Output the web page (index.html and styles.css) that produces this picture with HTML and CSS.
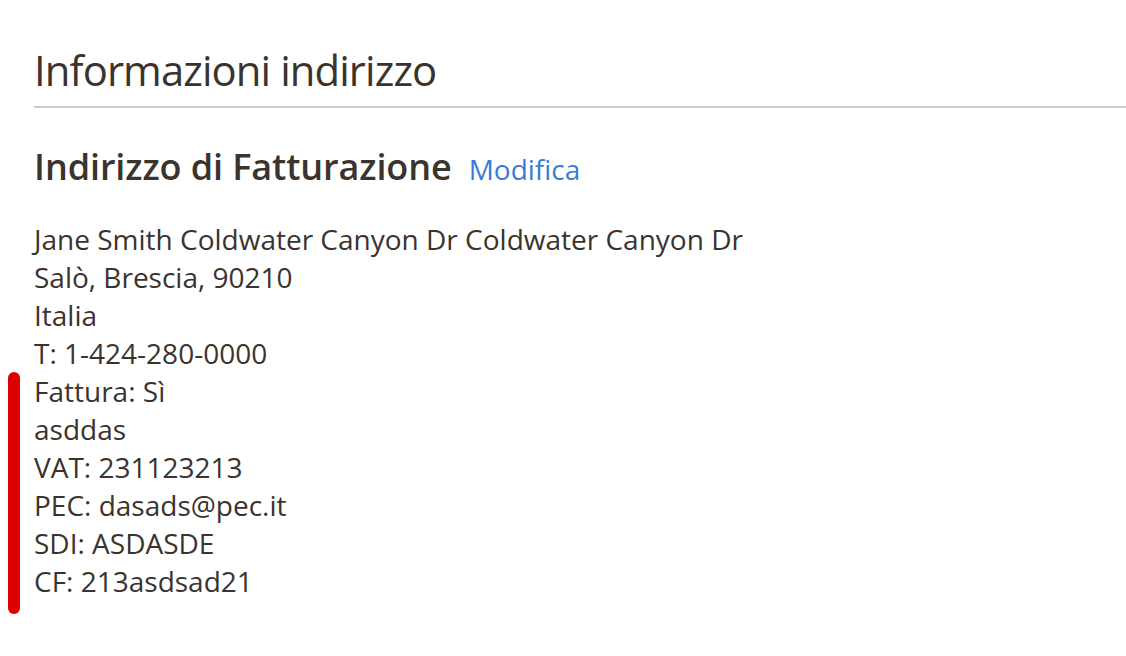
FILE: index.html
```html
<!DOCTYPE html>
<html lang="it">
<head>
  <meta charset="UTF-8">
  <meta name="viewport" content="width=device-width, initial-scale=1.0">
  <title>Informazioni indirizzo</title>
  <link rel="stylesheet" href="styles.css">
</head>
<body>
  <div class="block-address">
    <div class="block-title">
      <h2>Informazioni indirizzo</h2>
    </div>
    <div class="box">
      <div class="box-title">
        <span class="box-name">Indirizzo di Fatturazione</span>
        <a href="#" class="action-edit">Modifica</a>
      </div>
      <address class="box-content">
        Jane Smith Coldwater Canyon Dr Coldwater Canyon Dr<br>
        Salò, Brescia, 90210<br>
        Italia<br>
        T: 1-424-280-0000<br>
        <span class="marked">
          Fattura: Sì<br>
          asddas<br>
          VAT: 231123213<br>
          PEC: dasads@pec.it<br>
          SDI: ASDASDE<br>
          CF: 213asdsad21
        </span>
      </address>
    </div>
  </div>
</body>
</html>
```

FILE: styles.css
```css
*{
  margin: 0;
  padding: 0;
  box-sizing: border-box;
}
html, body{
  min-height: 100%;
}
body{
  background: #fff;
  color: #3a332e;
  font-family: "Open Sans", "Liberation Sans", sans-serif;
  font-size: 28px;
  line-height: 38px;
  padding-bottom: 40px;
}
.block-address{
  padding: 43px 0 0 34px;
}
.block-title{
  border-bottom: 2px solid #cccccc;
  padding-bottom: 9px;
}
.block-title h2{
  font-size: 41.8px;
  font-weight: 400;
  letter-spacing: -0.9px;
  line-height: 54px;
}
.box{
  padding-top: 36px;
}
.box-title{
  display: flex;
  align-items: baseline;
  gap: 17px;
  margin-bottom: 30px;
}
.box-name{
  font-size: 36px;
  font-weight: 600;
  letter-spacing: -0.1px;
  line-height: 46px;
}
.action-edit{
  color: #3a7bd5;
  text-decoration: none;
  font-size: 28px;
}
.box-content{
  font-style: normal;
}
.marked{
  position: relative;
  display: block;
}
.marked::before{
  content: "";
  position: absolute;
  left: -26px;
  top: 0;
  width: 12px;
  height: 242px;
  border-radius: 6px;
  background: #dd0000;
}
```
